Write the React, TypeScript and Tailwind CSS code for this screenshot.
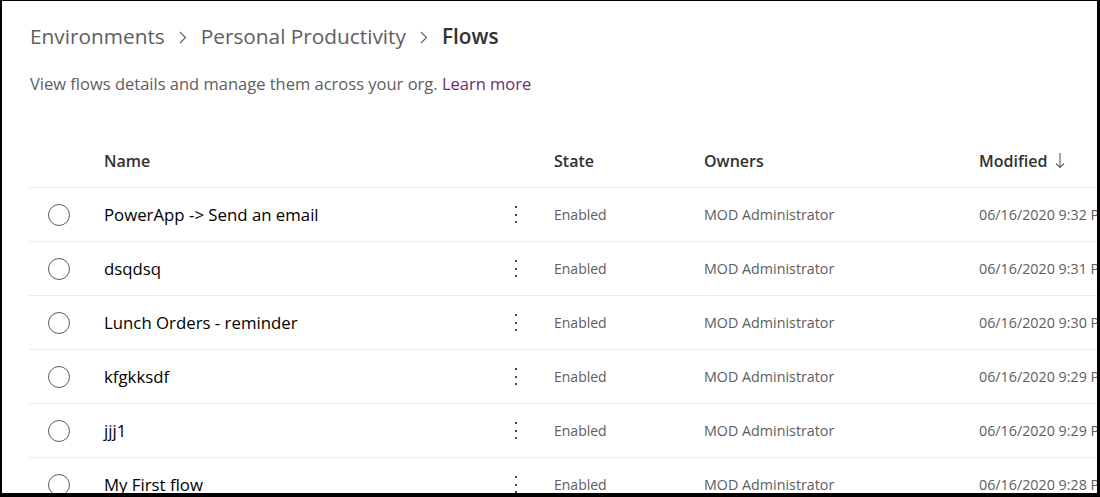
import React from "react";

const rows = [
  { name: "PowerApp -> Send an email", time: "06/16/2020 9:32 PM" },
  { name: "dsqdsq", time: "06/16/2020 9:31 PM" },
  { name: "Lunch Orders - reminder", time: "06/16/2020 9:30 PM" },
  { name: "kfgkksdf", time: "06/16/2020 9:29 PM" },
  { name: "jjj1", time: "06/16/2020 9:29 PM" },
  { name: "My First flow", time: "06/16/2020 9:28 PM" },
];

function Dots() {
  return (
    <div className="flex flex-col gap-[5.5px] items-center w-[2px]">
      <span className="block w-[2px] h-[2px] bg-[#742774]" />
      <span className="block w-[2px] h-[2px] bg-[#742774]" />
      <span className="block w-[2px] h-[2px] bg-[#742774]" />
    </div>
  );
}

function Chevron() {
  return (
    <svg width="8" height="13" viewBox="0 0 8 13" className="mx-[14px] shrink-0">
      <path d="M1 1 L6.5 6.5 L1 12" fill="none" stroke="#605e5c" strokeWidth="1.1" />
    </svg>
  );
}

function SortArrow() {
  return (
    <svg width="10" height="17" viewBox="0 0 10 17" className="ml-[8px] shrink-0">
      <path d="M5 1 L5 15.5 M1 11.5 L5 15.5 L9 11.5" fill="none" stroke="#605e5c" strokeWidth="1.1" />
    </svg>
  );
}

export default function App() {
  return (
    <div
      className="w-[1100px] h-[497px] overflow-hidden bg-white border-black border-l-2 border-t border-r-[3px] border-b-4 box-border"
      style={{ fontFamily: '"Segoe UI", "Open Sans", sans-serif' }}
    >
      <div className="pl-[28px] pt-[20px]">
        <div className="flex items-center h-[32px] text-[20.8px] text-[#605e5c] whitespace-nowrap">
          <span>Environments</span>
          <Chevron />
          <span>Personal Productivity</span>
          <Chevron />
          <span className="font-semibold text-[#323130]">Flows</span>
        </div>
        <div className="mt-[19px] h-[24px] flex items-center text-[16.5px] text-[#605e5c] whitespace-nowrap">
          View flows details and manage them across your org.&nbsp;
          <span className="text-[#742774]">Learn more</span>
        </div>
      </div>
      <div className="mt-[38px] pl-[27px]">
        <div className="flex items-center h-[54px] border-b border-[#edebe9] text-[16px] font-semibold text-[#323130] whitespace-nowrap">
          <div className="w-[75px] shrink-0" />
          <div className="w-[450px] shrink-0">Name</div>
          <div className="w-[150px] shrink-0">State</div>
          <div className="w-[275px] shrink-0">Owners</div>
          <div className="shrink-0 flex items-center">
            Modified
            <SortArrow />
          </div>
        </div>
        {rows.map((r) => (
          <div
            key={r.name}
            className="flex items-center h-[54px] border-b border-[#edebe9] whitespace-nowrap"
          >
            <div className="w-[75px] shrink-0 pl-[19px]">
              <div className="w-[22px] h-[22px] rounded-full border-[1.5px] border-[#605e5c]" />
            </div>
            <div className="w-[400px] shrink-0 text-[16.8px] text-black">{r.name}</div>
            <div className="w-[50px] shrink-0 pl-[11px]">
              <Dots />
            </div>
            <div className="w-[150px] shrink-0 text-[14px] text-[#605e5c]">Enabled</div>
            <div className="w-[275px] shrink-0 text-[14.3px] text-[#605e5c]">MOD Administrator</div>
            <div className="shrink-0 text-[14.3px] text-[#605e5c]">{r.time}</div>
          </div>
        ))}
      </div>
    </div>
  );
}
